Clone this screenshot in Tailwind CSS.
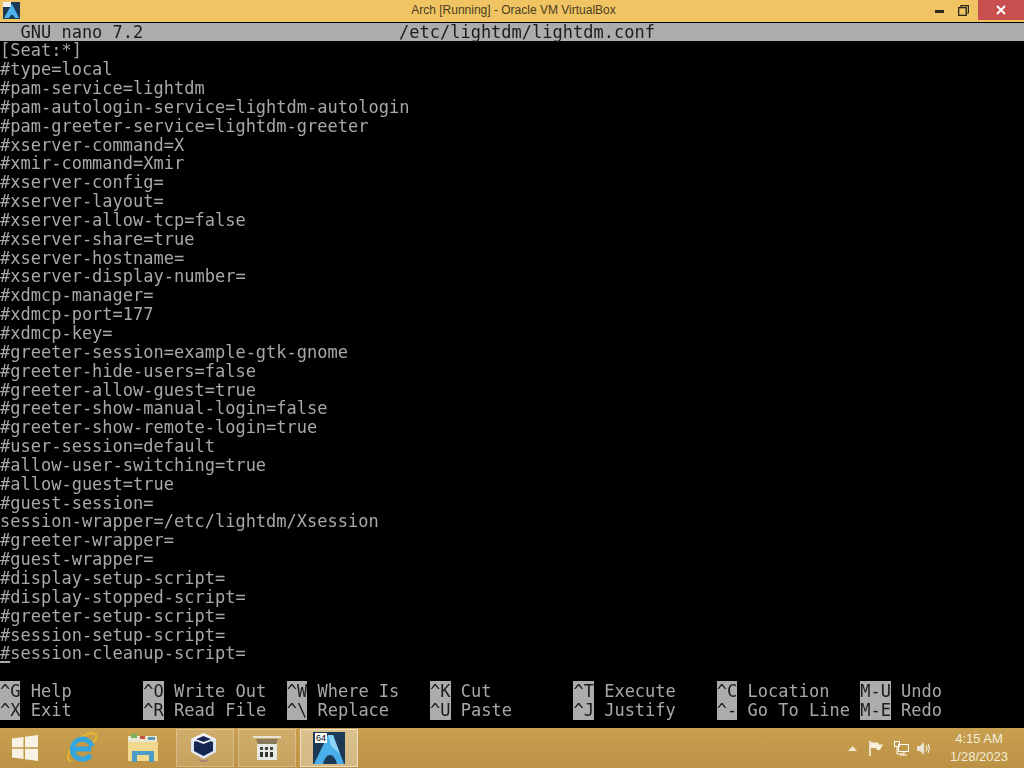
<!DOCTYPE html>
<html><head><meta charset="utf-8"><script src="https://cdn.jsdelivr.net/npm/@tailwindcss/browser@4"></script></head>
<body class="m-0 bg-black">
<div class="w-[1024px] h-[768px] overflow-hidden flex flex-col bg-black">
  <div class="h-[22px] shrink-0 flex items-start bg-[#f0c463]">
    <svg class="w-[20px] h-[20px] ml-[2px] mt-[1px] shrink-0" viewBox="0 0 20 20"><rect width="17" height="17" x="1" y="1" fill="#1d3a55"/><rect x="1" y="1" width="8" height="5" fill="#eee"/><path d="M2 17 L10 3 L17 17 L13 17 Q10 10 7 17 Z" fill="#4fb4ee"/></svg>
    <div class="flex-1 text-center font-['Liberation_Sans',sans-serif] text-[12px] leading-[21px] text-[#4a3c20] pl-[80px]">Arch [Running] - Oracle VM VirtualBox</div>
    <div class="w-[28px] h-[20px] flex items-center justify-center"><div class="w-[9px] h-[3px] bg-[#2e2a20] mt-[3px]"></div></div>
    <div class="w-[27px] h-[20px] flex items-center justify-start pl-[5px]">
      <svg class="w-[11px] h-[11px]" viewBox="0 0 11 11" fill="none" stroke="#2e2a20" stroke-width="1.2"><path d="M3 2.5V.6H10.4V8H8.4"/><rect x=".6" y="2.6" width="7.6" height="7.8" stroke-width="1.4"/></svg>
    </div>
    <div class="w-[46px] h-[20px] ml-[-2px] bg-[#c74f50] flex items-center justify-center">
      <svg class="w-[10px] h-[10px]" viewBox="0 0 10 10" stroke="#fff" stroke-width="2"><path d="M1 1L9 9M9 1L1 9"/></svg>
    </div>
  </div>
  <div class="flex-1 min-h-0 flex flex-col font-['DejaVu_Sans_Mono',monospace] text-[17px] leading-[18.85px] text-[#a8a8a8] whitespace-pre pt-[0.5px] blur-[0.35px]">
    <div class="h-[18.85px] bg-[#acacac] text-[#1c1c1c] flex"><span class="w-[399px]">  GNU nano 7.2</span><span>/etc/lightdm/lightdm.conf</span></div>
    <div class="h-[18.85px]">[Seat:*]</div>
    <div class="h-[18.85px]">#type=local</div>
    <div class="h-[18.85px]">#pam-service=lightdm</div>
    <div class="h-[18.85px]">#pam-autologin-service=lightdm-autologin</div>
    <div class="h-[18.85px]">#pam-greeter-service=lightdm-greeter</div>
    <div class="h-[18.85px]">#xserver-command=X</div>
    <div class="h-[18.85px]">#xmir-command=Xmir</div>
    <div class="h-[18.85px]">#xserver-config=</div>
    <div class="h-[18.85px]">#xserver-layout=</div>
    <div class="h-[18.85px]">#xserver-allow-tcp=false</div>
    <div class="h-[18.85px]">#xserver-share=true</div>
    <div class="h-[18.85px]">#xserver-hostname=</div>
    <div class="h-[18.85px]">#xserver-display-number=</div>
    <div class="h-[18.85px]">#xdmcp-manager=</div>
    <div class="h-[18.85px]">#xdmcp-port=177</div>
    <div class="h-[18.85px]">#xdmcp-key=</div>
    <div class="h-[18.85px]">#greeter-session=example-gtk-gnome</div>
    <div class="h-[18.85px]">#greeter-hide-users=false</div>
    <div class="h-[18.85px]">#greeter-allow-guest=true</div>
    <div class="h-[18.85px]">#greeter-show-manual-login=false</div>
    <div class="h-[18.85px]">#greeter-show-remote-login=true</div>
    <div class="h-[18.85px]">#user-session=default</div>
    <div class="h-[18.85px]">#allow-user-switching=true</div>
    <div class="h-[18.85px]">#allow-guest=true</div>
    <div class="h-[18.85px]">#guest-session=</div>
    <div class="h-[18.85px]">session-wrapper=/etc/lightdm/Xsession</div>
    <div class="h-[18.85px]">#greeter-wrapper=</div>
    <div class="h-[18.85px]">#guest-wrapper=</div>
    <div class="h-[18.85px]">#display-setup-script=</div>
    <div class="h-[18.85px]">#display-stopped-script=</div>
    <div class="h-[18.85px]">#greeter-setup-script=</div>
    <div class="h-[18.85px]">#session-setup-script=</div>
    <div class="h-[18.85px]"><span class="underline decoration-2 underline-offset-2">#</span>session-cleanup-script=</div>
    <div class="h-[18.85px]"></div>
    <div class="grid grid-cols-[repeat(7,143.36px)] grid-rows-[18.85px_18.85px]">
      <div><span class="bg-[#acacac] text-[#1c1c1c]">^G</span> Help</div>
      <div><span class="bg-[#acacac] text-[#1c1c1c]">^O</span> Write Out</div>
      <div><span class="bg-[#acacac] text-[#1c1c1c]">^W</span> Where Is</div>
      <div><span class="bg-[#acacac] text-[#1c1c1c]">^K</span> Cut</div>
      <div><span class="bg-[#acacac] text-[#1c1c1c]">^T</span> Execute</div>
      <div><span class="bg-[#acacac] text-[#1c1c1c]">^C</span> Location</div>
      <div><span class="bg-[#acacac] text-[#1c1c1c]">M-U</span> Undo</div>
      <div><span class="bg-[#acacac] text-[#1c1c1c]">^X</span> Exit</div>
      <div><span class="bg-[#acacac] text-[#1c1c1c]">^R</span> Read File</div>
      <div><span class="bg-[#acacac] text-[#1c1c1c]">^\</span> Replace</div>
      <div><span class="bg-[#acacac] text-[#1c1c1c]">^U</span> Paste</div>
      <div><span class="bg-[#acacac] text-[#1c1c1c]">^J</span> Justify</div>
      <div><span class="bg-[#acacac] text-[#1c1c1c]">^-</span> Go To Line</div>
      <div><span class="bg-[#acacac] text-[#1c1c1c]">M-E</span> Redo</div>
    </div>
  </div>
  <div class="h-[40px] shrink-0 flex items-center bg-gradient-to-b from-[#c8a050] to-[#bc9244]">
    <svg class="w-[26px] h-[26px] ml-[12px] shrink-0" viewBox="0 0 26 26" fill="#f7f2e4"><path d="M0 3.6L11.5 2V12.2H0ZM13 1.8L26 0V12.2H13ZM0 13.8H11.5V24L0 22.4ZM13 13.8H26V26L13 24.2Z"/></svg>
    <svg class="w-[32px] h-[32px] ml-[28px] shrink-0" viewBox="0 0 32 32" fill="none">
      <path d="M5 29C0 29 2 20 7 13C13 5 24 -1 29 2C32 4 30 8 27 11" stroke="#e8b830" stroke-width="2"/>
      <path d="M7.5 17H25M26 14.500A10 10 0 1 0 24.500 23" stroke="#35a5dd" stroke-width="5"/>
    </svg>
    <svg class="w-[32px] h-[30px] ml-[29px] shrink-0" viewBox="0 0 32 30"><path d="M1 3H30V12H1Z" fill="#e8e6cc"/><path d="M4 1H10V5H4Z" fill="#7ab060"/><path d="M13 3H18V6H13Z" fill="#c85040"/><path d="M21 4H28V7H21Z" fill="#5a9ab8"/><path d="M1 9H31V28H1Z" fill="#f2d88c"/><path d="M5 18H27V22H5ZM5 22H10V29H5ZM22 22H27V29H22Z" fill="#4c9cc8"/></svg>
    <div class="w-[58px] h-[38px] ml-[17px] shrink-0 flex items-center justify-center pr-[4px] bg-white/15 border border-white/25">
      <svg class="w-[27px] h-[32px]" viewBox="0 0 27 32"><path d="M13.5 1L26 7V20L13.5 27L1 20V7Z" fill="#dfe6f2"/><path d="M13.500 6L23 10V19L13.500 24L4 19V10Z" fill="#14264f"/><path d="M13.500 1L26 7L13.500 12L1 7Z" fill="#f0f2f8"/><path d="M13.500 4L21 7.200L13.500 10L6 7.200Z" fill="#14264f"/><path d="M8 27Q13.500 33 19 27L13.500 29Z" fill="#9a6a90"/></svg>
    </div>
    <div class="w-[58px] h-[38px] ml-[4px] shrink-0 flex items-center justify-center bg-white/15 border border-white/25">
      <svg class="w-[28px] h-[26px]" viewBox="0 0 28 26"><path d="M0 1H28V3H0Z" fill="#e8e4d8"/><path d="M3 4H25L23 9H5Z" fill="#8a7a5c"/><rect x="4" y="9" width="20" height="16" fill="#e8e8e2"/><path d="M7 12h3v3h-3zM12 12h3v3h-3zM17 12h3v3h-3z" fill="#444"/><path d="M7 17h3v5h-3zM12 17h3v5h-3zM17 17h3v5h-3z" fill="#333"/></svg>
    </div>
    <div class="w-[58px] h-[38px] ml-[4px] shrink-0 flex items-center justify-center bg-white/35 border border-white/50 relative">
      <svg class="w-[32px] h-[32px]" viewBox="0 0 32 32"><rect width="32" height="32" fill="#1c3a56"/><path d="M1 32L15 3H20L31 32H24C21 20 13 20 10 32Z" fill="#49aeea"/><path d="M15 3L20 3L27 22L18 14Z" fill="#8ed4f6"/></svg>
      <span class="absolute left-[14px] top-[3px] bg-white text-black font-['Liberation_Sans',sans-serif] text-[9px] leading-[10px] px-[1px]">64</span>
    </div>
    <div class="flex-1"></div>
    <svg class="w-[9px] h-[5px] mr-[12px] shrink-0" viewBox="0 0 9 5" fill="#f2e6d0"><path d="M0 5L4.500 0L9 5Z"/></svg>
    <svg class="w-[15px] h-[15px] mr-[10px] shrink-0" viewBox="0 0 15 15" fill="none"><path d="M1 0V15" stroke="#fff" stroke-width="1.400"/><path d="M2 1.500H9L10 3.500H14L11 9H8L7 7H2Z" fill="#f8f0d8"/></svg>
    <svg class="w-[15px] h-[15px] mr-[8px] shrink-0" viewBox="0 0 15 15" fill="none" stroke="#fff"><rect x=".5" y=".5" width="5" height="5"/><rect x="4.500" y="3.500" width="10" height="7"/><path d="M3 6V13H10V11"/><path d="M6 14H13"/></svg>
    <svg class="w-[15px] h-[15px] mr-[10px] shrink-0" viewBox="0 0 15 15" fill="none"><path d="M0 5H3L7 1V14L3 10H0Z" fill="#e8e4d4"/><path d="M9 4.500Q11 7.500 9 10.500M11 3Q14 7.500 11 12" stroke="#fff"/></svg>
    <div class="w-[74px] mr-[8px] shrink-0 text-center font-['Liberation_Sans',sans-serif] text-[13px] leading-[18px] text-[#f4ecd8]">
      <div>4:15 AM</div><div>1/28/2023</div>
    </div>
  </div>
</div>
</body></html>
